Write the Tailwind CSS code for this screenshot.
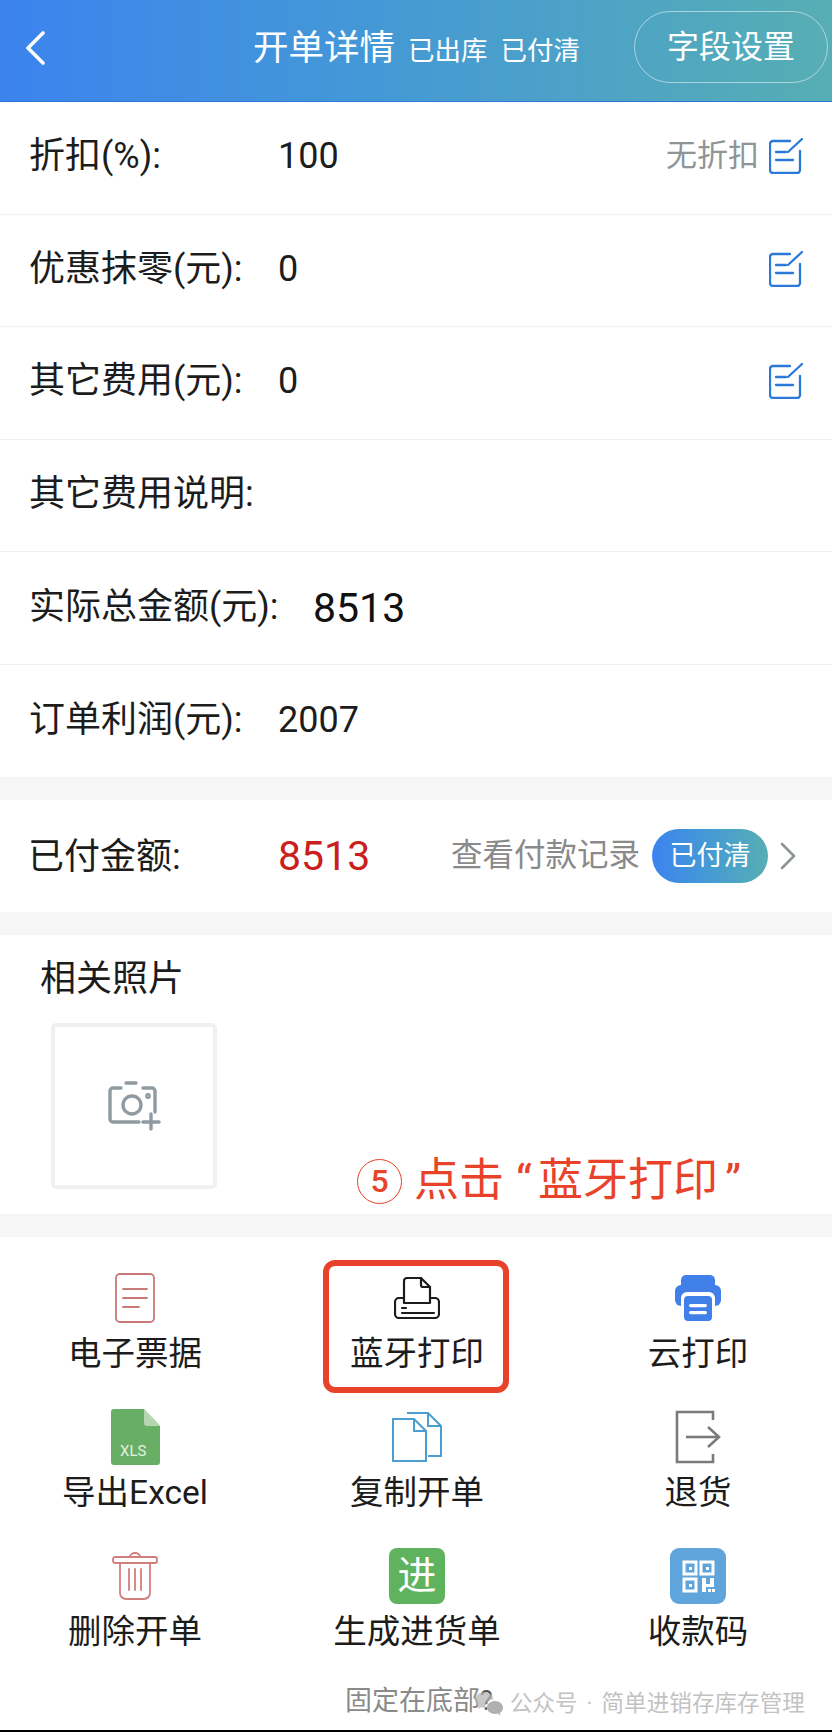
<!DOCTYPE html>
<html lang="zh-CN">
<head>
    <meta charset="UTF-8">
    <meta name="viewport" content="width=device-width, initial-scale=1.0">
    <title>开单详情</title>
    <script src="https://cdn.jsdelivr.net/npm/@tailwindcss/browser@4"></script>
</head>
<body class="bg-white">
<div class="w-[832px] h-[1732px] overflow-hidden flex flex-col text-[#1c1c1c] font-[family-name:Roboto,'Noto_Sans_CJK_SC',sans-serif]">

    <!-- header -->
    <header class="relative h-[102px] shrink-0 flex items-center text-white bg-gradient-to-r from-[#3c83ef] to-[#57aeb3] border-b border-[#2a78d8]">
        <svg class="ml-[24px] w-[22px] h-[34px] -mt-[6px]" viewBox="0 0 22 34" fill="none" stroke="#fff" stroke-width="3.6" stroke-linecap="round" stroke-linejoin="round"><path d="M19 2 L4 17 L19 32"/></svg>
        <div class="ml-[207px] -mt-[3px] flex items-baseline">
            <span class="text-[35.5px] leading-none">开单详情</span>
            <span class="ml-[13px] text-[26.5px] leading-none">已出库</span>
            <span class="ml-[13px] text-[26.5px] leading-none">已付清</span>
        </div>
        <div class="absolute left-[634px] top-[11px] w-[194px] h-[72px] rounded-[36px] border border-white/50 flex items-center justify-center text-[32px]">字段设置</div>
    </header>

    <!-- amounts -->
    <div class="flex items-center h-[112.5px] pl-[29px] pr-[29px] pb-[3px] border-b border-[#f1f1f1]">
        <span class="w-[249px] text-[36px]">折扣(%):</span>
        <span class="text-[36px]">100</span>
        <span class="ml-auto mr-[10px] text-[31px] text-[#8f9597]">无折扣</span>
        <svg class="w-[34px] h-[36px]" viewBox="0 0 34 36" fill="none" stroke="#2a78d8" stroke-width="2.3" stroke-linecap="round"><path d="M21 3 H4 a3 3 0 0 0-3 3 V32 a3 3 0 0 0 3 3 H28 a3 3 0 0 0 3-3 V13"/><path d="M19 14 L33 1"/><path d="M7 14 H17"/><path d="M7 22 H24"/></svg>
    </div>
    <div class="flex items-center h-[112.5px] pl-[29px] pr-[29px] pb-[3px] border-b border-[#f1f1f1]">
        <span class="w-[249px] text-[36px]">优惠抹零(元):</span>
        <span class="text-[36px]">0</span>
        <svg class="ml-auto w-[34px] h-[36px]" viewBox="0 0 34 36" fill="none" stroke="#2a78d8" stroke-width="2.3" stroke-linecap="round"><path d="M21 3 H4 a3 3 0 0 0-3 3 V32 a3 3 0 0 0 3 3 H28 a3 3 0 0 0 3-3 V13"/><path d="M19 14 L33 1"/><path d="M7 14 H17"/><path d="M7 22 H24"/></svg>
    </div>
    <div class="flex items-center h-[112.5px] pl-[29px] pr-[29px] pb-[3px] border-b border-[#f1f1f1]">
        <span class="w-[249px] text-[36px]">其它费用(元):</span>
        <span class="text-[36px]">0</span>
        <svg class="ml-auto w-[34px] h-[36px]" viewBox="0 0 34 36" fill="none" stroke="#2a78d8" stroke-width="2.3" stroke-linecap="round"><path d="M21 3 H4 a3 3 0 0 0-3 3 V32 a3 3 0 0 0 3 3 H28 a3 3 0 0 0 3-3 V13"/><path d="M19 14 L33 1"/><path d="M7 14 H17"/><path d="M7 22 H24"/></svg>
    </div>
    <div class="flex items-center h-[112.5px] pl-[29px] pr-[29px] pb-[3px] border-b border-[#f1f1f1]">
        <span class="text-[36px]">其它费用说明:</span>
    </div>
    <div class="flex items-center h-[112.5px] pl-[29px] pr-[29px] pb-[1px] border-b border-[#f1f1f1]">
        <span class="w-[284px] text-[36px]">实际总金额(元):</span>
        <span class="text-[41px] text-[#111] mt-[2px]">8513</span>
    </div>
    <div class="flex items-center h-[112.5px] pl-[29px] pr-[29px] pb-[1px]">
        <span class="w-[249px] text-[36px]">订单利润(元):</span>
        <span class="text-[36px]">2007</span>
    </div>

    <div class="h-[23px] shrink-0 bg-[#f6f6f6]"></div>

    <!-- paid -->
    <div class="flex items-center h-[112px] shrink-0 pl-[28px] pr-[35px]">
        <span class="w-[250px] text-[36px] mt-[1px]">已付金额:</span>
        <span class="text-[41px] text-[#c9201c] mt-[1px]">8513</span>
        <span class="ml-auto text-[31.5px] text-[#8a8a8a]">查看付款记录</span>
        <span class="ml-[12px] w-[116px] h-[54px] rounded-[27px] bg-gradient-to-r from-[#3c83ef] to-[#57aeb3] text-white text-[27px] flex items-center justify-center">已付清</span>
        <svg class="ml-[11px] w-[18px] h-[28px]" viewBox="0 0 18 28" fill="none" stroke="#8f9597" stroke-width="2.6" stroke-linecap="round" stroke-linejoin="round"><path d="M3 2 L15 14 L3 26"/></svg>
    </div>

    <div class="h-[23px] shrink-0 bg-[#f6f6f6]"></div>

    <!-- photos -->
    <div class="relative h-[279px] shrink-0 pl-[40px] pt-[22px]">
        <div class="text-[36px] leading-[44px]">相关照片</div>
        <div class="ml-[11px] mt-[22px] w-[166px] h-[166px] rounded-[5px] border-[4px] border-[#eef0f1] flex items-center justify-center">
            <svg class="w-[54px] h-[50px]" viewBox="0 0 54 50" fill="none" stroke="#8f9ba1" stroke-width="3.4" stroke-linecap="round" stroke-linejoin="round">
                <path d="M14 7 H6 a3 3 0 0 0-3 3 V38 a3 3 0 0 0 3 3 H32"/>
                <path d="M36 7 H45 a3 3 0 0 1 3 3 V31"/>
                <path d="M19 2 H29"/>
                <circle cx="25" cy="24" r="9"/>
                <circle cx="41" cy="15" r="1.2"/>
                <path d="M44 33 V48"/>
                <path d="M36 41 H52"/>
            </svg>
        </div>
        <!-- annotation -->
        <div class="absolute left-[357px] top-[223px] flex items-center text-[#e8432a] text-[45px] leading-[46px] whitespace-nowrap">
            <span class="w-[45px] h-[45px] rounded-full border-[1.5px] border-[#e8432a] flex items-center justify-center text-[32px] font-medium">5</span>
            <span class="ml-[12px]">点击</span>
            <span class="ml-[12px] w-[22px]">“</span>
            <span>蓝牙打印</span>
            <span class="ml-[7px]">”</span>
        </div>
    </div>

    <div class="h-[23px] shrink-0 bg-[#f6f6f6]"></div>

    <!-- actions -->
    <div class="relative flex-1 pt-[27px]">
        <div class="grid grid-cols-[270px_294px_268px] auto-rows-[139px]">
            <div class="flex flex-col items-center">
                <div class="h-[68px] flex items-center justify-center">
                    <svg class="w-[40px] h-[50px]" viewBox="0 0 40 50" fill="none" stroke="#c97a78" stroke-width="1.8" stroke-linecap="round"><rect x="1" y="1" width="38" height="48" rx="4"/><path d="M8 16 H32"/><path d="M8 25 H32"/><path d="M8 34 H24"/></svg>
                </div>
                <div class="h-[44px] text-[33.5px] leading-[44px]">电子票据</div>
            </div>
            <div class="relative flex flex-col items-center">
                <div class="absolute left-[53px] top-[-4px] w-[186px] h-[133px] rounded-[12px] border-[6px] border-[#e8432a]"></div>
                <div class="h-[68px] flex items-center justify-center">
                    <svg class="w-[46px] h-[42px]" viewBox="0 0 46 42" fill="none" stroke="#1c1c1c" stroke-width="2.2" stroke-linejoin="round" stroke-linecap="round"><path d="M10 26 V4 a3 3 0 0 1 3-3 H27 L36 10 V26 Z"/><path d="M27 1 V8 a2 2 0 0 0 2 2 H36"/><path d="M10 21 H5 a4 4 0 0 0-4 4 V37 a4 4 0 0 0 4 4 H41 a4 4 0 0 0 4-4 V25 a4 4 0 0 0-4-4 H36"/><path d="M8 31 H12"/><path d="M8 36 H40"/></svg>
                </div>
                <div class="h-[44px] text-[33.5px] leading-[44px]">蓝牙打印</div>
            </div>
            <div class="flex flex-col items-center">
                <div class="h-[68px] flex items-center justify-center">
                    <svg class="w-[46px] h-[46px]" viewBox="0 0 46 46"><rect x="6" y="0" width="34" height="18" rx="5" fill="#4180e8"/><rect x="0" y="10" width="46" height="21" rx="6" fill="#4180e8"/><rect x="6" y="17" width="34" height="29" rx="6" fill="#fff"/><rect x="9" y="21" width="28" height="25" rx="4" fill="#4180e8"/><rect x="14" y="29" width="18" height="3.2" rx="1.6" fill="#fff"/><rect x="14" y="36" width="18" height="3.2" rx="1.6" fill="#fff"/></svg>
                </div>
                <div class="h-[44px] text-[33.5px] leading-[44px]">云打印</div>
            </div>

            <div class="flex flex-col items-center">
                <div class="h-[68px] flex items-center justify-center">
                    <svg class="w-[49px] h-[56px]" viewBox="0 0 49 56"><path fill="#69ae65" d="M3 0 H33 L49 17 V53 a3 3 0 0 1-3 3 H3 a3 3 0 0 1-3-3 V3 a3 3 0 0 1 3-3 Z"/><path fill="#b5d6b0" d="M33 0 L49 17 H36 a3 3 0 0 1-3-3 Z"/><text x="9" y="47" font-size="15" fill="#e3f1e0" font-family="Roboto, sans-serif">XLS</text></svg>
                </div>
                <div class="h-[44px] text-[33.5px] leading-[44px]">导出Excel</div>
            </div>
            <div class="flex flex-col items-center">
                <div class="h-[68px] flex items-center justify-center">
                    <svg class="w-[50px] h-[50px]" viewBox="0 0 50 50" fill="none" stroke="#4a9fd0" stroke-width="2"><path d="M1 7 H22 L34 19 V49 H1 Z"/><path d="M22 7 V19 H34"/><path d="M15 1 H36 L49 14 V44 H36"/><path d="M36 1 V14 H49"/></svg>
                </div>
                <div class="h-[44px] text-[33.5px] leading-[44px]">复制开单</div>
            </div>
            <div class="flex flex-col items-center">
                <div class="h-[68px] flex items-center justify-center">
                    <svg class="w-[46px] h-[54px]" viewBox="0 0 46 54" fill="none" stroke="#7a7a7a" stroke-width="2.6"><path d="M38 10 V2 H2 V52 H38 V44"/><path d="M11 27 H43"/><path d="M33 17 L44 27 L33 37"/></svg>
                </div>
                <div class="h-[44px] text-[33.5px] leading-[44px]">退货</div>
            </div>

            <div class="flex flex-col items-center">
                <div class="h-[68px] flex items-center justify-center">
                    <svg class="w-[46px] h-[48px]" viewBox="0 0 46 48" fill="none" stroke="#d07f7d" stroke-width="1.8" stroke-linecap="round"><rect x="1" y="5" width="44" height="6" rx="2"/><path d="M18 5 a5 4 0 0 1 10 0"/><path d="M8 11 V41 a6 6 0 0 0 6 6 H32 a6 6 0 0 0 6-6 V11"/><path d="M17 17 V38"/><path d="M23 17 V38"/><path d="M29 17 V38"/></svg>
                </div>
                <div class="h-[44px] text-[33.5px] leading-[44px]">删除开单</div>
            </div>
            <div class="flex flex-col items-center">
                <div class="h-[68px] flex items-center justify-center">
                    <div class="w-[56px] h-[56px] rounded-[8px] bg-[#5fb35f] text-white text-[39px] leading-none flex items-center justify-center">进</div>
                </div>
                <div class="h-[44px] text-[33.5px] leading-[44px]">生成进货单</div>
            </div>
            <div class="flex flex-col items-center">
                <div class="h-[68px] flex items-center justify-center">
                    <svg class="w-[56px] h-[56px]" viewBox="0 0 56 56"><rect width="56" height="56" rx="9" fill="#5fa5db"/><g fill="none" stroke="#fff" stroke-width="3"><rect x="14" y="14" width="12" height="12"/><rect x="31" y="14" width="12" height="12"/><rect x="14" y="31" width="12" height="12"/></g><g fill="#fff"><rect x="19" y="19" width="3" height="3"/><rect x="36" y="19" width="3" height="3"/><rect x="19" y="36" width="3" height="3"/><path d="M32 30 H36 V36 H40 V30 H44 V39 H36 V44 H32 Z"/><rect x="38" y="41" width="3" height="3"/><rect x="42" y="41" width="3" height="3"/></g></svg>
                </div>
                <div class="h-[44px] text-[33.5px] leading-[44px]">收款码</div>
            </div>
        </div>

        <!-- footer note -->
        <div class="pl-[345px] h-[40px] flex items-center text-[27px] text-[#8a8a8a]">固定在底部<span class="text-[#555]">?</span></div>
        <!-- watermark over the note -->
        <div class="absolute left-[475px] top-[450px] flex items-center text-[22.5px] text-[#c2c2c2] whitespace-nowrap">
            <svg class="w-[28px] h-[24px]" viewBox="0 0 28 24"><path fill="#b5b5b5" fill-opacity="0.75" d="M10 0 C4.5 0 0 3.6 0 8 c0 2.5 1.4 4.6 3.6 6 L2.8 17 L6.2 15.2 a12 12 0 0 0 3.8.6 h.7 a7 7 0 0 1 7.8-8.2 C18 3.2 14.4 0 10 0 Z"/><path fill="#b0b0b0" d="M20 9 c-4.4 0-8 2.9-8 6.5 S15.6 22 20 22 a9 9 0 0 0 2.6-.4 L25.5 23.5 L24.8 21 A6.2 6.2 0 0 0 28 15.5 C28 11.9 24.4 9 20 9 Z"/></svg>
            <span class="ml-[7px]">公众号</span>
            <span class="ml-[9px] w-[15px]">·</span>
            <span class="tracking-[0.1px]">简单进销存库存管理</span>
        </div>
    </div>

    <div class="h-[2px] shrink-0 bg-black"></div>
</div>
</body>
</html>
